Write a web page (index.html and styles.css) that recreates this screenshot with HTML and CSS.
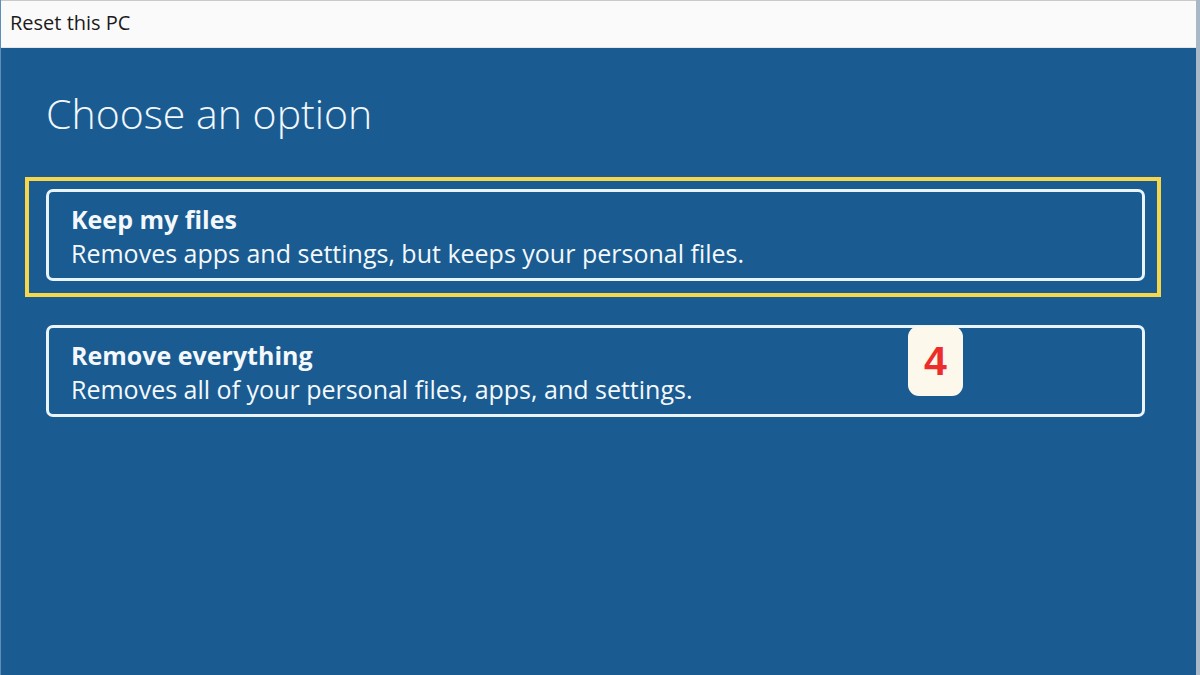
FILE: index.html
```html
<!DOCTYPE html>
<html lang="en">
<head>
    <meta charset="UTF-8">
    <meta name="viewport" content="width=device-width, initial-scale=1.0">
    <title>Reset this PC</title>
    <link rel="stylesheet" href="styles.css">
</head>
<body>
<div class="window">
    <div class="titlebar">Reset this PC</div>
    <div class="content">
        <h1>Choose an option</h1>
        <div class="highlight">
            <div class="option">
                <div class="option-title">Keep my files</div>
                <div class="option-desc">Removes apps and settings, but keeps your personal files.</div>
            </div>
        </div>
        <div class="option option-second">
            <div class="option-title">Remove everything</div>
            <div class="option-desc">Removes all of your personal files, apps, and settings.</div>
        </div>
        <div class="step-badge">4</div>
    </div>
</div>
</body>
</html>
```

FILE: styles.css
```css
body {
    margin: 0;
    font-family: "Open Sans", "Noto Sans", sans-serif;
    background-color: #1a5c92;
}
.window {
    width: 1200px;
    height: 675px;
    box-sizing: border-box;
    border-left: 1px solid #5e8db5;
    border-right: 4px solid #a8b8c6;
    display: flex;
    flex-direction: column;
    overflow: hidden;
}
.titlebar {
    height: 48px;
    flex-shrink: 0;
    box-sizing: border-box;
    background-color: #fafafa;
    border-top: 1px solid #c9c9c9;
    border-bottom: 1px solid #e6e6e6;
    color: #1b1b1b;
    font-size: 20px;
    padding: 8px 0 0 9px;
}
.content {
    position: relative;
    flex: 1;
    background-color: #1a5c92;
    padding: 0 51px 0 45px;
}
h1 {
    margin: 37px 0 0 0;
    font-weight: 300;
    font-size: 41px;
    line-height: 56px;
    color: #f2f7fb;
}
.highlight {
    margin: 36px -16px 0 -21px;
    border: 4px solid #f6d64a;
    padding: 8px 12px 12px 17px;
}
.option {
    height: 92px;
    box-sizing: border-box;
    border: 3px solid #e9f4fc;
    border-radius: 7px;
    padding: 10px 0 0 22px;
    color: #f4f8fb;
}
.option-second {
    margin-top: 28px;
}
.option-title {
    font-weight: 700;
    font-size: 25px;
    line-height: 34px;
}
.option-desc {
    font-size: 25px;
    line-height: 35px;
}
.step-badge {
    position: absolute;
    left: 907px;
    top: 278px;
    width: 55px;
    height: 70px;
    border-radius: 11px;
    background-color: #fdf8ec;
    color: #ec2d2c;
    font-family: "Liberation Sans", Arial, sans-serif;
    font-weight: 700;
    font-size: 41px;
    display: flex;
    align-items: center;
    justify-content: center;
}
```
